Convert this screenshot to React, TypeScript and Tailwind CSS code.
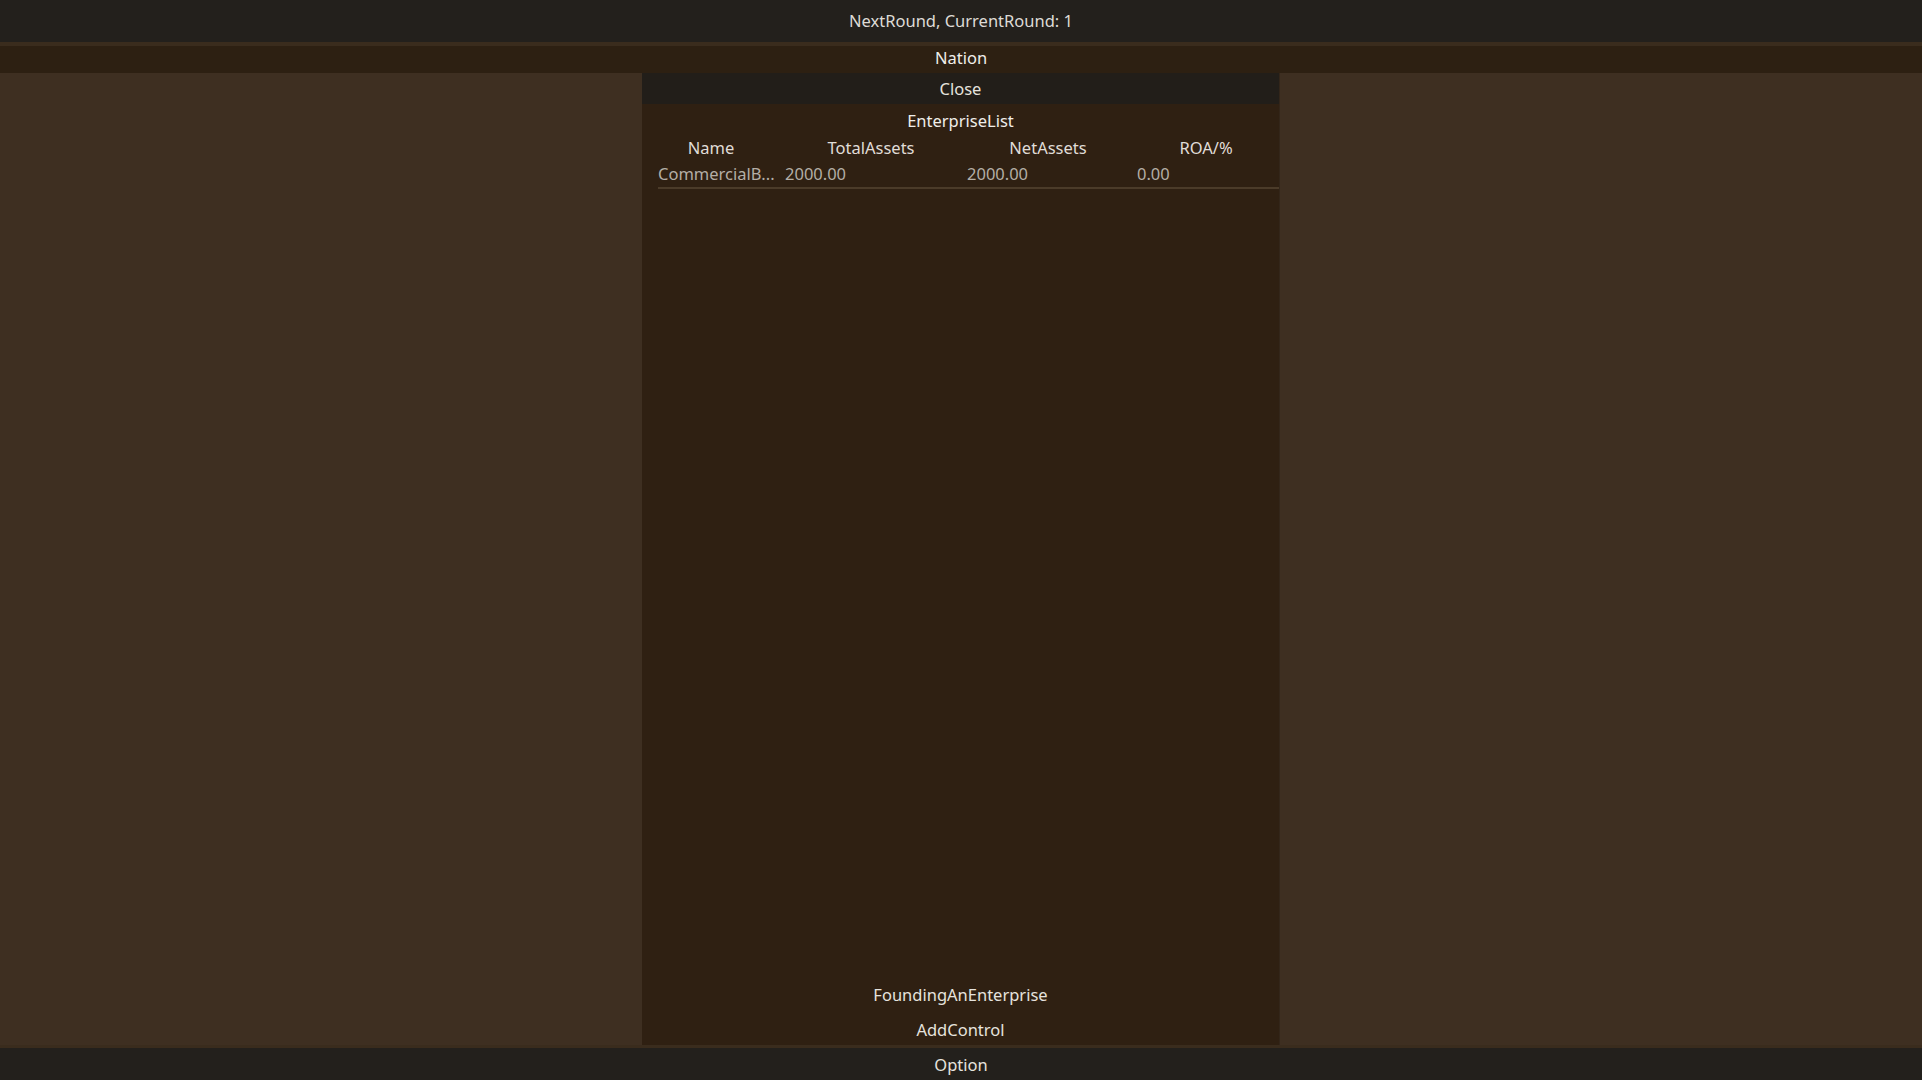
const rows = [
  { name: 'CommercialB...', total: '2000.00', net: '2000.00', roa: '0.00' },
]

export default function App() {
  return (
    <div
      className="h-[1080px] w-full flex flex-col bg-[#3e2f21] text-[16.5px] text-[#e6e3de] overflow-hidden"
      style={{ fontFamily: '"Noto Sans", "Open Sans", sans-serif' }}
    >
      <div className="h-[42px] shrink-0 bg-[#23201c] flex items-center justify-center text-[#dedbd6]">
        NextRound, CurrentRound: 1
      </div>
      <div className="h-[4px] shrink-0 bg-[#3a2c1d]" />
      <div className="h-[27px] shrink-0 pb-[3px] bg-[#2d2012] flex items-center justify-center text-[#f0eeea]">
        Nation
      </div>

      <div className="flex-1 flex justify-center min-h-0">
        <div className="w-[638px] flex flex-col bg-[#2f2012] border-r border-[#33261a]">
          <div className="h-[31px] shrink-0 pt-[2px] bg-[#221e19] flex items-center justify-center text-[#e6e3de]">
            Close
          </div>
          <div className="h-[22px] mt-[6px] flex items-center justify-center text-[#f0eeea]">
            EnterpriseList
          </div>
          <div className="ml-[16px] mt-[5px] h-[22px] flex items-center text-[#e0ddd8]">
            <div className="w-[106px] text-center">Name</div>
            <div className="w-[172px] ml-[21px] text-center">TotalAssets</div>
            <div className="w-[162px] ml-[10px] text-center">NetAssets</div>
            <div className="w-[138px] ml-[8px] text-center">ROA/%</div>
          </div>
          {rows.map((r) => (
            <div
              key={r.name}
              className="ml-[16px] mt-[5px] h-[25px] pb-[3px] flex items-center text-[#b4aea6] border-b-2 border-[#4b3b29]"
            >
              <div className="w-[127px] whitespace-nowrap">{r.name}</div>
              <div className="w-[182px]">{r.total}</div>
              <div className="w-[170px]">{r.net}</div>
              <div className="w-[138px]">{r.roa}</div>
            </div>
          ))}
          <div className="flex-1" />
          <div className="h-[30px] mb-[5px] flex items-center justify-center text-[#e6e3de]">
            FoundingAnEnterprise
          </div>
          <div className="h-[30px] flex items-center justify-center text-[#e6e3de]">
            AddControl
          </div>
        </div>
      </div>

      <div className="h-[3px] shrink-0 bg-[#3a2c1d]" />
      <div className="h-[32px] shrink-0 pt-[2px] bg-[#23201c] flex items-center justify-center text-[#e6e3de]">
        Option
      </div>
    </div>
  )
}
